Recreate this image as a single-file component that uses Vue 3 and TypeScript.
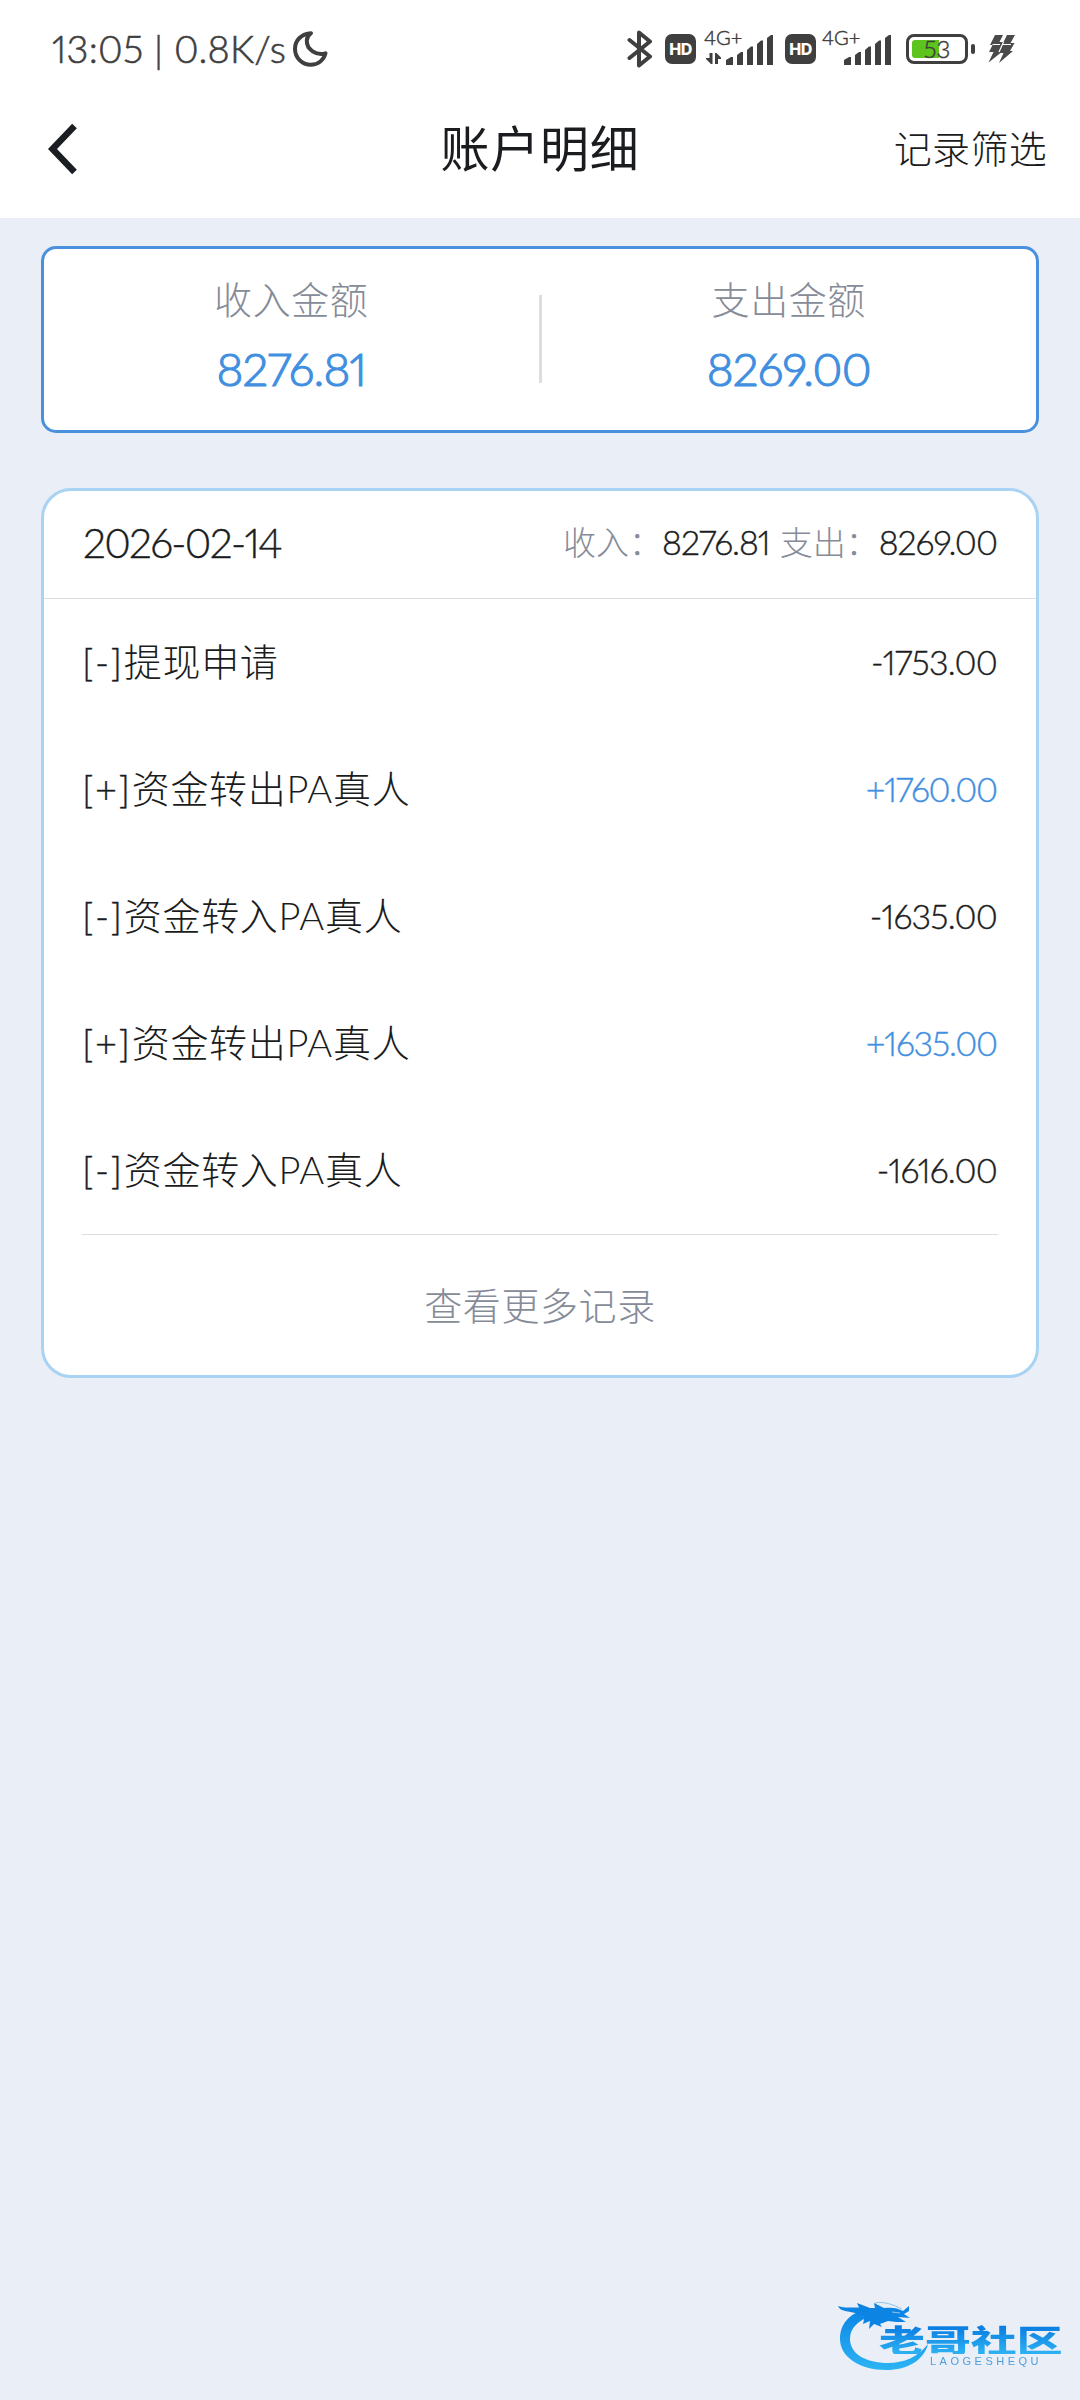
<script setup lang="ts">

  import { ref, computed } from 'vue'

  type RecordItem = {
    id: number;
    title: string;
    amount: number;
  }

  const date = ref('2026-02-14')
  const income = ref(8276.81)
  const expense = ref(8269)
  const battery = ref(53)

  const records = ref<RecordItem[]>([
    { id: 1, title: '提现申请', amount: -1753 },
    { id: 2, title: '资金转出PA真人', amount: 1760 },
    { id: 3, title: '资金转入PA真人', amount: -1635 },
    { id: 4, title: '资金转出PA真人', amount: 1635 },
    { id: 5, title: '资金转入PA真人', amount: -1616 }
  ])

  // 保留两位小数
  const format = (val: number) => {
    return val.toFixed(2)
  }

  const signed = (val: number) => {
    return (val > 0 ? '+' : '') + format(val)
  }

  // 电池内部可用宽度 50
  const batteryWidth = computed(() => battery.value * 0.5)
</script>

<template>
  <div class="page">
    <header class="top">
      <div class="status">
        <span class="clock">13:05 | 0.8K/s</span>
        <svg class="moon" width="36" height="38" viewBox="0 0 36 38">
          <path d="M19 3.2C9.5 3.6 3 10.500 3 18.800C3 27.800 10 34.800 18.800 34.800C25.800 34.800 31.500 30.500 33.500 23.300C24.500 26 14.500 19.500 14.800 10.500C14.900 7.500 16.500 5 19 3.200Z" fill="none" stroke="#3f3f3f" stroke-width="4" stroke-linejoin="round" />
        </svg>
        <div class="status-right">
          <svg class="bt" width="26" height="40" viewBox="0 0 26 40">
            <path d="M2.500 11L23 27.500L12 36.500V3.500L23 12.500L2.500 29" fill="none" stroke="#3f3f3f" stroke-width="4" stroke-linejoin="round" stroke-linecap="round" />
          </svg>
          <span class="hd">HD</span>
          <div class="signal">
            <span class="net">4G+</span>
            <svg width="70" height="32" viewBox="0 0 70 32">
              <g fill="#3f3f3f">
                <path d="M5.500 20H8.500V31H7L2 26V25H5.500ZM11 20H12.500L17 24.500V26H14V31H11Z" />
                <path d="M22 32V27L27 24H29V32ZM33 32V22L37 19H39V32ZM43 32V17L47 13.500H49V32ZM53 32V11L57 7.500H59V32ZM63 32V5L67 2H69V32Z" />
              </g>
            </svg>
          </div>
          <span class="hd">HD</span>
          <div class="signal last">
            <span class="net">4G+</span>
            <svg width="70" height="32" viewBox="0 0 70 32">
              <path d="M22 32V27L27 24H29V32ZM33 32V22L37 19H39V32ZM43 32V17L47 13.500H49V32ZM53 32V11L57 7.500H59V32ZM63 32V5L67 2H69V32Z" fill="#3f3f3f" />
            </svg>
          </div>
          <div class="battery">
            <div class="battery-level" :style="{ width: batteryWidth + 'px' }"></div>
            <span class="battery-num">{{ battery }}</span>
          </div>
          <div class="battery-cap"></div>
          <svg class="bolt" width="28" height="30" viewBox="0 0 28 30">
            <path d="M7 1H15L11.500 8H15.500L19 1H27L22.500 9H26.500L22 17H25L11 29L15.500 19H12.500L0.500 28.500L5.500 18H1L4.500 11H2Z" fill="#4a4a4a" />
            <path d="M15.500 8L11 18M4.500 10.500H12M15 10.500H23" stroke="#fff" stroke-width="1.200" fill="none" />
          </svg>
        </div>
      </div>
      <nav class="nav">
        <svg class="back" width="30" height="52" viewBox="0 0 30 52">
          <path d="M26.500 3L4.500 26L26.500 49" fill="none" stroke="#1a1d22" stroke-width="6.500" />
        </svg>
        <h1 class="title">账户明细</h1>
        <span class="filter">记录筛选</span>
      </nav>
    </header>

    <section class="summary">
      <div class="summary-item">
        <div class="summary-label">收入金额</div>
        <div class="summary-value">{{ format(income) }}</div>
      </div>
      <div class="summary-line"></div>
      <div class="summary-item">
        <div class="summary-label">支出金额</div>
        <div class="summary-value">{{ format(expense) }}</div>
      </div>
    </section>

    <section class="card">
      <div class="card-head">
        <span class="date">{{ date }}</span>
        <div class="totals">
          <span class="totals-label">收入：</span>
          <span class="totals-value">{{ format(income) }}</span>
          <span class="totals-label next">支出：</span>
          <span class="totals-value">{{ format(expense) }}</span>
        </div>
      </div>
      <ul class="list">
        <li v-for="item in records" :key="item.id" class="row">
          <span class="row-title"><span class="sign">[{{ item.amount > 0 ? '+' : '-' }}]</span>{{ item.title }}</span>
          <span class="amount" :class="{ plus: item.amount > 0 }">{{ signed(item.amount) }}</span>
        </li>
      </ul>
      <div class="more">查看更多记录</div>
    </section>

    <div class="logo">
      <svg class="dragon" width="96" height="80" viewBox="0 0 96 80">
        <defs>
          <linearGradient id="swoosh" x1="0" y1="0" x2="0" y2="1">
            <stop offset="0" stop-color="#0b84e4" />
            <stop offset="1" stop-color="#2cb4f4" />
          </linearGradient>
        </defs>
        <path d="M28 15C10 20 2 31 2 45C2 63 22 76 48 76C70 76 86 66 90 50C80 63 66 69 50 69C28 69 12 60 12 45C12 34 20 26 34 22Z" fill="url(#swoosh)" />
        <path d="M0 12C7 14.500 14 13 21 13.500L19 9L32 14L37 14L36 9L46 14C54 13 60 14 65 17L71 12L71 17L66 20L72 24L60 23L68 28L58 28L50 27L42 30L44 33L36 30L31 35L32 27L25 30L27 21L10 17.500C5 17 1 15 0 12Z" fill="#0b84e4" />
        <path d="M37 9C46 7 56 11 64 15M54 18L62 19" fill="none" stroke="#8cc4f0" stroke-width="1" />
      </svg>
      <div class="logo-name">老哥社区</div>
      <div class="logo-en">LAOGESHEQU</div>
    </div>
  </div>
</template>

<style>
html,
body {
  margin: 0;
  background: #e9eef7;
}
</style>

<style scoped>
.page {
  position: relative;
  width: 1080px;
  height: 2400px;
  overflow: hidden;
  background: #e9eef7;
  color: #1a1c20;
  font-family: Lato, "Noto Sans CJK SC", sans-serif;
  font-weight: 300;
  font-feature-settings: "pnum" 1;
}
.top {
  height: 218px;
  background: #fff;
}
.status {
  display: flex;
  align-items: flex-start;
  height: 98px;
  padding-left: 52px;
  color: #3f3f3f;
}
.clock {
  width: 240px;
  margin-top: 25px;
  line-height: 46px;
  font-size: 38px;
  letter-spacing: 0.25px;
  white-space: nowrap;
  -webkit-text-stroke: 0.6px currentColor;
}
.moon {
  margin-top: 30px;
}
.status-right {
  display: flex;
  align-items: flex-start;
  margin-left: auto;
  padding-right: 64px;
}
.bt {
  margin: 29px 12px 0 0;
}
.hd {
  width: 31px;
  height: 30px;
  margin-top: 34px;
  border-radius: 7px;
  background: #3f3f3f;
  color: #fff;
  font: 800 16px/30px Inter, sans-serif;
  letter-spacing: -0.5px;
  text-align: center;
}
.signal {
  position: relative;
  width: 70px;
  height: 32px;
  margin: 33px 11px 0 8px;
}
.signal.last {
  margin-left: 6px;
  margin-right: 10px;
}
.net {
  position: absolute;
  left: 0;
  top: -6px;
  font-size: 20px;
  line-height: 20px;
  -webkit-text-stroke: 0.5px currentColor;
}
.battery {
  position: relative;
  box-sizing: border-box;
  width: 62px;
  height: 30px;
  margin: 34px 3px 0 4px;
  padding: 3px;
  border: 3px solid #3f3f3f;
  border-radius: 8px;
}
.battery-level {
  height: 18px;
  border-radius: 3px 0 0 3px;
  background: #5cc41c;
}
.battery-num {
  position: absolute;
  inset: 0;
  font-size: 24px;
  line-height: 24px;
  text-align: center;
  -webkit-text-stroke: 0.5px currentColor;
}
.battery-cap {
  width: 4px;
  height: 10px;
  margin-top: 44px;
  border-radius: 2px;
  background: #3f3f3f;
}
.bolt {
  margin: 34px 0 0 13px;
}
.nav {
  display: grid;
  grid-template-columns: 1fr auto 1fr;
  align-items: center;
  height: 100px;
  padding: 0 33px;
}
.back {
  margin: 2px 0 0 15px;
}
.title {
  margin: 0;
  font-size: 49px;
  line-height: 60px;
  font-weight: 400;
  letter-spacing: 0.7px;
}
.filter {
  justify-self: end;
  margin-top: -4px;
  font-size: 38px;
  letter-spacing: 0.3px;
}
.summary {
  display: flex;
  align-items: center;
  box-sizing: border-box;
  width: 998px;
  height: 187px;
  margin: 28px 0 0 41px;
  border: 3px solid #4990dd;
  border-radius: 15px;
  background: #fff;
}
.summary-item {
  flex: 1;
  margin-top: -12px;
  text-align: center;
}
.summary-label {
  color: #868b98;
  font-size: 38px;
  line-height: 56px;
  letter-spacing: 0.6px;
}
.summary-value {
  margin-top: 14px;
  color: #418fe0;
  font-size: 46px;
  line-height: 56px;
  letter-spacing: -0.8px;
  -webkit-text-stroke: 1.2px currentColor;
}
.summary-line {
  width: 3px;
  height: 88px;
  margin-top: -2px;
  background: #dadde2;
}
.card {
  box-sizing: border-box;
  width: 998px;
  height: 890px;
  margin: 55px 0 0 41px;
  border: 3px solid #a9d3f3;
  border-radius: 30px;
  background: #fff;
}
.card-head {
  display: flex;
  align-items: center;
  justify-content: space-between;
  height: 107px;
  padding: 0 39px;
  border-bottom: 1px solid #d9dce1;
}
.date {
  margin-top: -4px;
  font-size: 41px;
  letter-spacing: -1.7px;
  -webkit-text-stroke: 0.4px currentColor;
}
.totals {
  display: flex;
  align-items: center;
  margin-top: -5px;
  font-size: 34px;
  line-height: 50px;
}
.totals-label {
  color: #868b98;
  font-size: 33px;
}
.totals-label.next {
  margin-left: 10px;
}
.totals-value {
  letter-spacing: -1px;
  -webkit-text-stroke: 0.4px currentColor;
}
.list {
  margin: 0;
  padding: 0 39px 0 38px;
  list-style: none;
}
.row {
  display: flex;
  align-items: center;
  justify-content: space-between;
  height: 127px;
}
.row-title {
  margin-top: -6px;
  font-size: 38px;
  letter-spacing: 0.7px;
}
.sign {
  letter-spacing: 1.7px;
  -webkit-text-stroke: 0.4px currentColor;
}
.amount {
  margin-top: -2px;
  font-size: 34px;
  letter-spacing: -0.8px;
  -webkit-text-stroke: 0.4px currentColor;
}
.amount.plus {
  letter-spacing: -1.2px;
  color: #418fe0;
}
.more {
  height: 140px;
  margin: 0 38px;
  border-top: 1px solid #d9dce1;
  color: #868b98;
  font-size: 38px;
  line-height: 140px;
  letter-spacing: 0.6px;
  text-align: center;
}
.logo {
  position: absolute;
  left: 838px;
  top: 2294px;
  width: 230px;
  height: 90px;
  filter: blur(0.5px);
}
.dragon {
  position: absolute;
  left: 0;
  top: 0;
}
.logo-name {
  position: absolute;
  left: 41px;
  top: 29px;
  background: linear-gradient(#0b7fe2 15%, #2cb0f2 95%);
  -webkit-background-clip: text;
  background-clip: text;
  color: transparent;
  font-family: "Noto Sans CJK SC", sans-serif;
  font-size: 31px;
  font-weight: 900;
  line-height: 31px;
  white-space: nowrap;
  transform: scaleX(1.48);
  transform-origin: 0 50%;
}
.logo-en {
  position: absolute;
  left: 92px;
  top: 61px;
  color: #4d9fdd;
  font-family: "Liberation Sans", Arial, sans-serif;
  font-size: 11px;
  line-height: 12px;
  font-weight: 400;
  letter-spacing: 3.5px;
  white-space: nowrap;
}
</style>
